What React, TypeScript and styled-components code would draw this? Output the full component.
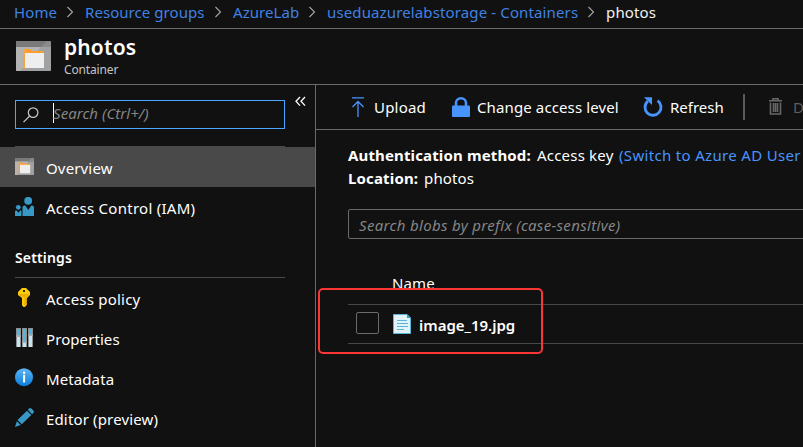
import React from "react";
import styled, { createGlobalStyle } from "styled-components";

const Global = createGlobalStyle`
  *{box-sizing:border-box}
  html,body{margin:0;background:#111;overflow:hidden}
  body{font-family:"Noto Sans","Open Sans",sans-serif;font-size:15px;color:#fff;line-height:20px}
  svg{display:block;flex:none}
`;

const Page = styled.div`
  width: 803px;
  height: 447px;
  display: flex;
  flex-direction: column;
  overflow: hidden;
  background: #111;
`;
const Label = styled.span<{ $w?: number; $ls?: number; $size?: number; $weight?: number }>`
  flex: none;
  white-space: nowrap;
  width: ${(p) => (p.$w ? `${p.$w}px` : "auto")};
  letter-spacing: ${(p) => p.$ls ?? 0.15}px;
  font-size: ${(p) => p.$size ?? 15}px;
  font-weight: ${(p) => p.$weight ?? 400};
`;
const Breadcrumb = styled.nav`
  height: 29px;
  flex: none;
  display: flex;
  align-items: center;
  padding: 0 0 4px 14px;
  border-bottom: 1px solid #6a6a6a;
`;
const Crumb = styled(Label)`
  color: #3f82e4;
`;
const Current = styled(Label)`
  color: #f2f2f2;
`;
const Sep = styled.svg`
  width: 8px;
  height: 12px;
  margin: 0 0 0 9px;
  & + span {
    margin-left: 11px;
  }
`;
const Header = styled.header`
  height: 56px;
  flex: none;
  display: flex;
  padding: 12px 0 0 16px;
  gap: 13px;
  border-bottom: 1px solid #6a6a6a;
`;
const Titles = styled.div`
  display: flex;
  flex-direction: column;
  margin-top: -6px;
`;
const Title = styled(Label)`
  line-height: 25px;
`;
const Subtitle = styled(Label)`
  color: #c4c4c4;
  line-height: 16px;
  margin-top: 2px;
`;
const Body = styled.div`
  flex: 1;
  min-height: 0;
  display: flex;
`;
const Sidebar = styled.aside`
  width: 316px;
  flex: none;
  border-right: 1px solid #6a6a6a;
`;
const SearchRow = styled.div`
  height: 61px;
  display: flex;
  padding: 15px 0 0 15px;
`;
const SearchBox = styled.div`
  width: 270px;
  height: 29px;
  border: 1px solid #4ca6ff;
  display: flex;
  align-items: center;
  padding-left: 7px;
`;
const Caret = styled.i`
  width: 1px;
  height: 20px;
  background: #fff;
  margin: 0 -1px 3px 14px;
`;
const Hint = styled(Label)`
  color: #858585;
  font-style: italic;
`;
const SearchHint = styled(Hint)`
  margin-bottom: 4px;
`;
const Collapse = styled.svg`
  width: 11px;
  height: 11px;
  margin: -4px 0 0 10px;
`;
const Rule = styled.div`
  height: 1px;
  width: 270px;
  margin-left: 15px;
  background: #484848;
`;
const Item = styled.div<{ $active?: boolean }>`
  height: 40px;
  display: flex;
  align-items: center;
  padding: 2px 0 0 15px;
  gap: 12px;
  background: ${(p) => (p.$active ? "#494949" : "transparent")};
  svg {
    margin-top: -3px;
  }
`;
const Section = styled.div`
  height: 50px;
  padding: 20px 0 0 15px;
`;
const Main = styled.main`
  flex: 1;
  min-width: 0;
  overflow: hidden;
  position: relative;
`;
const Toolbar = styled.div`
  height: 45px;
  display: flex;
  align-items: center;
  padding-left: 35px;
  border-bottom: 1px solid #6a6a6a;
`;
const Command = styled.div<{ $gap: number; $next?: number }>`
  display: flex;
  align-items: center;
  flex: none;
  gap: ${(p) => p.$gap}px;
  margin-right: ${(p) => p.$next ?? 0}px;
  svg {
    margin-top: -1px;
  }
`;
const Divider = styled.i`
  width: 2px;
  height: 26px;
  background: #5a5a5a;
  margin-right: 23px;
  flex: none;
`;
const Dim = styled(Label)`
  color: #5e5e5e;
`;
const Info = styled.div`
  padding: 14px 0 0 32px;
`;
const InfoLine = styled.div`
  display: flex;
  height: 23px;
  line-height: 23px;
`;
const Link = styled(Label)`
  color: #4894fe;
`;
const Filter = styled.div`
  margin: 19px 0 0 32px;
  width: 480px;
  height: 30px;
  border: 1px solid #6a6a6a;
  border-radius: 2px;
  padding: 5px 0 0 10px;
`;
const TableHead = styled.div`
  margin-left: 32px;
  height: 66px;
  padding: 34px 0 0 44px;
  border-bottom: 1px solid #484848;
`;
const Row = styled.div`
  margin-left: 32px;
  height: 39px;
  border-bottom: 1px solid #484848;
  display: flex;
  padding: 7px 0 0 8px;
  svg {
    margin-top: 2px;
  }
`;
const Checkbox = styled.i`
  width: 23px;
  height: 22px;
  border: 1px solid #6a6a6a;
  border-radius: 2px;
  margin-right: 14px;
`;
const FileName = styled(Label)`
  margin: 3px 0 0 8px;
`;
const Highlight = styled.div`
  position: absolute;
  left: 2px;
  top: 203px;
  width: 225px;
  height: 66px;
  border: 2px solid #fc3535;
  border-radius: 5px;
`;

const Chevron = () => (
  <Sep viewBox="0 0 8 12">
    <path d="M1.5 1 6.5 6 1.5 11" fill="none" stroke="#a5a5a5" strokeWidth="1.1" />
  </Sep>
);
const FolderIcon = ({ w = 35, h = 30 }: { w?: number; h?: number }) => (
  <svg width={w} height={h} viewBox="0 0 35 30" preserveAspectRatio="none">
    <rect width="35" height="30" rx="1" fill="#a0a1a2" />
    <path d="M1 0H34a1 1 0 0 1 1 1V6H0V1a1 1 0 0 1 1-1Z" fill="#7a7a7a" />
    <path d="M0 6H25L4 30H1a1 1 0 0 1-1-1Z" fill="#b3b3b3" />
    <path d="M31 0 25 6H35V1Z" fill="#8b8b8b" />
    <path d="M7 28V9q0-1 1-1h6l2 2h10q1 0 1 1v2H9V28Z" fill="#ff9d2e" />
    <path d="M9 12H28V27H9Z" fill="#eee" />
    <path d="M7 8h2V27H7Z" fill="#f3a446" />
  </svg>
);
const PeopleIcon = () => (
  <svg width="19" height="19" viewBox="0 0 19 19" fill="#3999c6">
    <circle cx="13.2" cy="3.8" r="3.9" />
    <path d="M7.5 19V10.5q0-2 2-2h.8L13.3 13l3-4.5h.7q2 0 2 2V19Z" />
    <circle cx="3.3" cy="10.3" r="2.4" />
    <path d="M0 19V14.5q0-1 1-1h.7l1.8 2.2 1.7-2.2H6V19Z" />
    <path d="M6 13.5h.6V19H6Z" fill="#2a7397" />
  </svg>
);
const KeyIcon = () => (
  <svg width="19" height="19" viewBox="0 0 19 19">
    <path d="M7 0h4l4 4v3l-3 3v1.2l-.8.8.8.8v1l-.8.8.8 1v1L10 19H8.5L7 17.3V10L3 7V4Z" fill="#fccb0b" />
    <path d="M9.5 9v9.5l2.5-2v-1l-.8-1 .8-.8v-1l-.8-.8.8-.8V9.5Z" fill="#efad00" />
    <path d="M4 6h10v1l-2 2H7L4 7Z" fill="#eeb000" />
    <path d="M8 2h2v2H8Z" fill="#3b2d00" />
  </svg>
);
const PropertiesIcon = () => (
  <svg width="19" height="19" viewBox="0 0 19 19">
    {[[1, 8], [7, 14], [13, 7]].map(([x, y]) => (
      <g key={x}>
        <path d={`M${x} 0h5v19h-5Z`} fill="#8c8e90" />
        <path d={`M${x + 1} 1h3V${y}h-3Z`} fill="#53b4dc" />
        <path d={`M${x + 1} ${y + 1}h3V19h-3Z`} fill="#c5e5f2" />
        <path d={`M${x} ${y - 0.5}h5v1.2h-5Z`} fill="#b7b7b7" />
      </g>
    ))}
  </svg>
);
const InfoIcon = () => (
  <svg width="19" height="19" viewBox="0 0 19 19">
    <defs>
      <linearGradient id="info" x2="0" y2="1">
        <stop stopColor="#5eb5f2" />
        <stop offset="1" stopColor="#087ddc" />
      </linearGradient>
    </defs>
    <circle cx="9" cy="9.2" r="9" fill="url(#info)" />
    <circle cx="9.1" cy="4.7" r="1.2" fill="#fff" />
    <path d="M8.1 6.8h2V14.5h-2Z" fill="#fff" />
  </svg>
);
const PencilIcon = () => (
  <svg width="19" height="19" viewBox="0 0 19 19" fill="#3999c6">
    <path d="m12.8 1.8 1.2-1.2q1.3-1.1 2.6.1l1.7 1.7q1.2 1.3 0 2.6l-1.2 1.2Z" />
    <path d="M12 2.8 16.3 7 6.8 16.3 2.5 12.1Z" />
    <path d="m1.8 13.2 4 3.9L0 19Z" />
  </svg>
);

const crumbs: [string, number, number][] = [
  ["Home", 43, 0.1],
  ["Resource groups", 120, 0.06],
  ["AzureLab", 66, 0.05],
  ["useduazurelabstorage - Containers", 251, 0.13],
];
const settings = [
  { icon: <KeyIcon />, text: "Access policy", ls: 0.22 },
  { icon: <PropertiesIcon />, text: "Properties", ls: 0.08 },
  { icon: <InfoIcon />, text: "Metadata", ls: 0.1 },
  { icon: <PencilIcon />, text: "Editor (preview)", ls: 0.15 },
];

export default function App() {
  return (
    <Page>
      <Global />
      <Breadcrumb>
        {crumbs.map(([text, w, ls]) => (
          <React.Fragment key={text}>
            <Crumb $w={w} $ls={ls}>{text}</Crumb>
            <Chevron />
            <span />
          </React.Fragment>
        ))}
        <Current>photos</Current>
      </Breadcrumb>
      <Header>
        <FolderIcon />
        <Titles>
          <Title $size={21} $weight={600}>photos</Title>
          <Subtitle $size={12} $ls={-0.15}>Container</Subtitle>
        </Titles>
      </Header>
      <Body>
        <Sidebar>
          <SearchRow>
            <SearchBox>
              <svg width="16" height="16" viewBox="0 0 16 16" fill="none" stroke="#c8c8c8" strokeWidth="1.2">
                <circle cx="10.1" cy="5.6" r="4.8" />
                <path d="M6.7 9 .5 15.2" />
              </svg>
              <Caret />
              <SearchHint $ls={0.05}>Search (Ctrl+/)</SearchHint>
            </SearchBox>
            <Collapse viewBox="0 0 11 11" fill="none" stroke="#fff" strokeWidth="1.3">
              <path d="M5 1 1 5.3 5 9.6M10 1 6 5.3l4 4.3" />
            </Collapse>
          </SearchRow>
          <Rule />
          <Item $active>
            <FolderIcon w={19} h={17} />
            <Label>Overview</Label>
          </Item>
          <Item>
            <PeopleIcon />
            <Label $ls={0.27}>Access Control (IAM)</Label>
          </Item>
          <Section>
            <Label $size={14} $weight={600}>Settings</Label>
          </Section>
          <Rule />
          <div>
            {settings.map((s) => (
              <Item key={s.text}>
                {s.icon}
                <Label $ls={s.ls}>{s.text}</Label>
              </Item>
            ))}
          </div>
        </Sidebar>
        <Main>
          <Toolbar>
            <Command $gap={9} $next={26}>
              <svg width="14" height="20" viewBox="0 0 14 20" fill="none" stroke="#4894fe" strokeWidth="1.3">
                <path d="M1 .9H13M7 20V4.5M1.5 10 7 4.5 12.5 10" />
              </svg>
              <Label $w={52} $ls={0.2}>Upload</Label>
            </Command>
            <Command $gap={7} $next={24}>
              <svg width="18" height="20" viewBox="0 0 18 20">
                <path d="M4 10V5.8a5 4.5 0 0 1 10 0V10" fill="none" stroke="#4894fe" strokeWidth="2.6" />
                <rect y="8.5" width="18" height="11.5" rx="1" fill="#4894fe" />
              </svg>
              <Label $w={142} $ls={0.12}>Change access level</Label>
            </Command>
            <Command $gap={7} $next={19}>
              <svg width="20" height="20" viewBox="0 0 20 20">
                <path d="M4.9 4.1A8 8 0 1 0 14.6 3.7" fill="none" stroke="#4894fe" strokeWidth="2.8" />
                <path d="M1 .3H9V8Z" fill="#4894fe" />
              </svg>
              <Label $w={54} $ls={0}>Refresh</Label>
            </Command>
            <Divider />
            <Command $gap={10}>
              <svg width="15" height="17" viewBox="0 0 15 17" fill="none" stroke="#686868" strokeWidth="1.6">
                <path d="M1 2.7H14M5 2.5V.8h5v1.7M2.5 4.5V16h10V4.5M5.5 5v9M7.5 5v9M9.5 5v9" />
              </svg>
              <Dim>Delete</Dim>
            </Command>
          </Toolbar>
          <Info>
            <InfoLine>
              <Label $w={189} $weight={700} $ls={0.14}>Authentication method:</Label>
              <Label $w={82} $ls={0.2}>Access key</Label>
              <Link $ls={0.33}>(Switch to Azure AD User Account)</Link>
            </InfoLine>
            <InfoLine>
              <Label $w={76} $weight={700}>Location:</Label>
              <Label>photos</Label>
            </InfoLine>
          </Info>
          <Filter>
            <Hint $ls={0.33}>Search blobs by prefix (case-sensitive)</Hint>
          </Filter>
          <TableHead>
            <Label>Name</Label>
          </TableHead>
          <Row>
            <Checkbox />
            <svg width="18" height="20" viewBox="0 0 18 20">
              <path d="M.5 .5H14L17.5 4V19.5H.5Z" fill="#e2f2f9" stroke="#59b4d9" />
              <path d="M14 0 18 4H14Z" fill="#3999c6" />
              <path d="M4 6.5H14M4 9.5H15M4 12.5H15M4 15.5H11" stroke="#59b4d9" />
            </svg>
            <FileName $weight={600} $ls={0}>image_19.jpg</FileName>
          </Row>
          <Highlight />
        </Main>
      </Body>
    </Page>
  );
}
